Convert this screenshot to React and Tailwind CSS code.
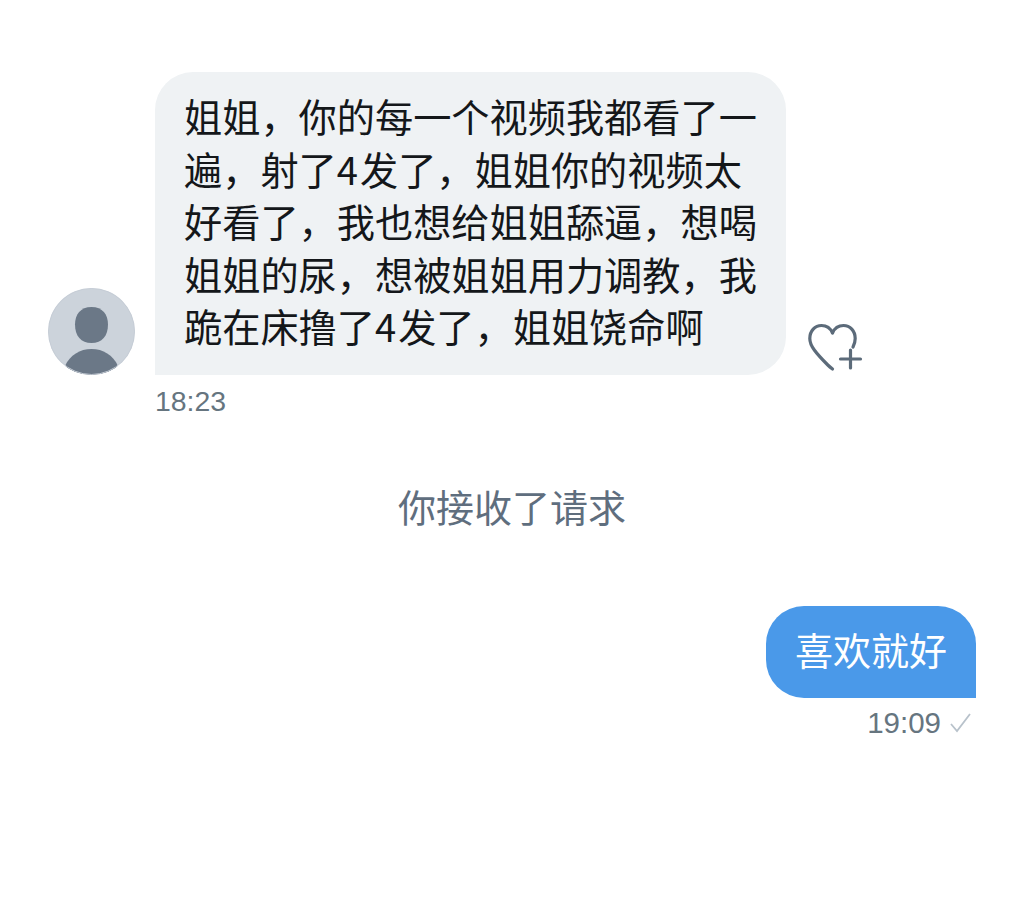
const font = { fontFamily: '"Noto Sans CJK SC", "Liberation Sans", sans-serif' };
const latin = { fontFamily: '"Liberation Sans", sans-serif' };

const Four = () => <span className="mr-[2px]">4</span>;

const lines = [
  <>姐姐，你的每一个视频我都看了一</>,
  <>遍，射了<Four />发了，姐姐你的视频太</>,
  <>好看了，我也想给姐姐舔逼，想喝</>,
  <>姐姐的尿，想被姐姐用力调教，我</>,
  <>跪在床撸了<Four />发了，姐姐饶命啊</>,
];

const Avatar = () => (
  <svg width="87" height="87" viewBox="0 0 87 87" className="shrink-0">
    <defs>
      <clipPath id="avatar-clip">
        <circle cx="43.5" cy="43.5" r="43.5" />
      </clipPath>
    </defs>
    <g clipPath="url(#avatar-clip)">
      <rect width="87" height="87" fill="#ccd3db" />
      <path d="M43.5 19c11 0 16.500 7.500 16.500 17.500C60 48 54 55 43.500 55S27 48 27 36.500C27 26.500 32.500 19 43.500 19z" fill="#6b7887" />
      <path d="M17 78c5-11 15-17 26.500-17S65 67 70 78c-5 5.500-15 9-26.500 9S22 83.500 17 78z" fill="#6b7887" />
      <circle cx="43.5" cy="43.5" r="43" fill="none" stroke="#c6cdd6" strokeWidth="1" />
    </g>
  </svg>
);

const HeartPlus = () => (
  <svg width="56" height="50" viewBox="0 0 56 50" fill="none" stroke="#5c6b7a" strokeWidth="3.200" strokeLinecap="round" strokeLinejoin="round" className="shrink-0">
    <path d="M46 25c1.500-3 2.200-5.500 2.200-8.500C48.200 9 43 3.500 36.500 3.500c-5 0-9 2.800-11 7.500-2-4.700-6-7.500-11-7.500C8 3.500 2.800 9 2.800 16.500c0 4 1.600 7.500 4.500 11.500 4 5.500 9 10.500 13.500 15 1.500 1.500 3 2.700 4.700 4" />
    <path d="M43.500 28v18M33.500 37h20" />
  </svg>
);

export default function App() {
  return (
    <div className="w-full h-[921px] bg-white pt-[72px] overflow-hidden" style={font}>
      <div className="flex items-end pl-[48px]">
        <Avatar />
        <div className="ml-[20px] w-[631px] h-[303px] bg-[#eff2f4] rounded-[38px] rounded-bl-none pl-[29px] pt-[18px] text-[38.2px] leading-[52.500px] text-[#14171a]">
          {lines.map((line, i) => (
            <div key={i} className="whitespace-nowrap">{line}</div>
          ))}
        </div>
        <div className="ml-[21px] mb-[3px]">
          <HeartPlus />
        </div>
      </div>

      <div className="pl-[155px] mt-[8px] text-[28.4px] leading-[36px] text-[#66757f]" style={latin}>
        18:23
      </div>

      <div className="mt-[61px] text-center text-[38px] leading-[52px] text-[#5f6e7e]">
        你接收了请求
      </div>

      <div className="flex justify-end pr-[48px] mt-[74px]">
        <div className="w-[210px] h-[92px] bg-[#4a99e9] rounded-[38px] rounded-br-none pl-[29px] pt-[17px] text-[38px] leading-[52px] text-white whitespace-nowrap">
          喜欢就好
        </div>
      </div>

      <div className="flex justify-end items-center pr-[51px] mt-[7px] text-[#66757f]" style={latin}>
        <span className="text-[29.500px] leading-[36px]">19:09</span>
        <svg width="24" height="22" viewBox="0 0 24 22" fill="none" stroke="#b8c2cb" strokeWidth="1.800" className="ml-[8px]">
          <path d="M2 12l6 7L21 2" />
        </svg>
      </div>
    </div>
  );
}
